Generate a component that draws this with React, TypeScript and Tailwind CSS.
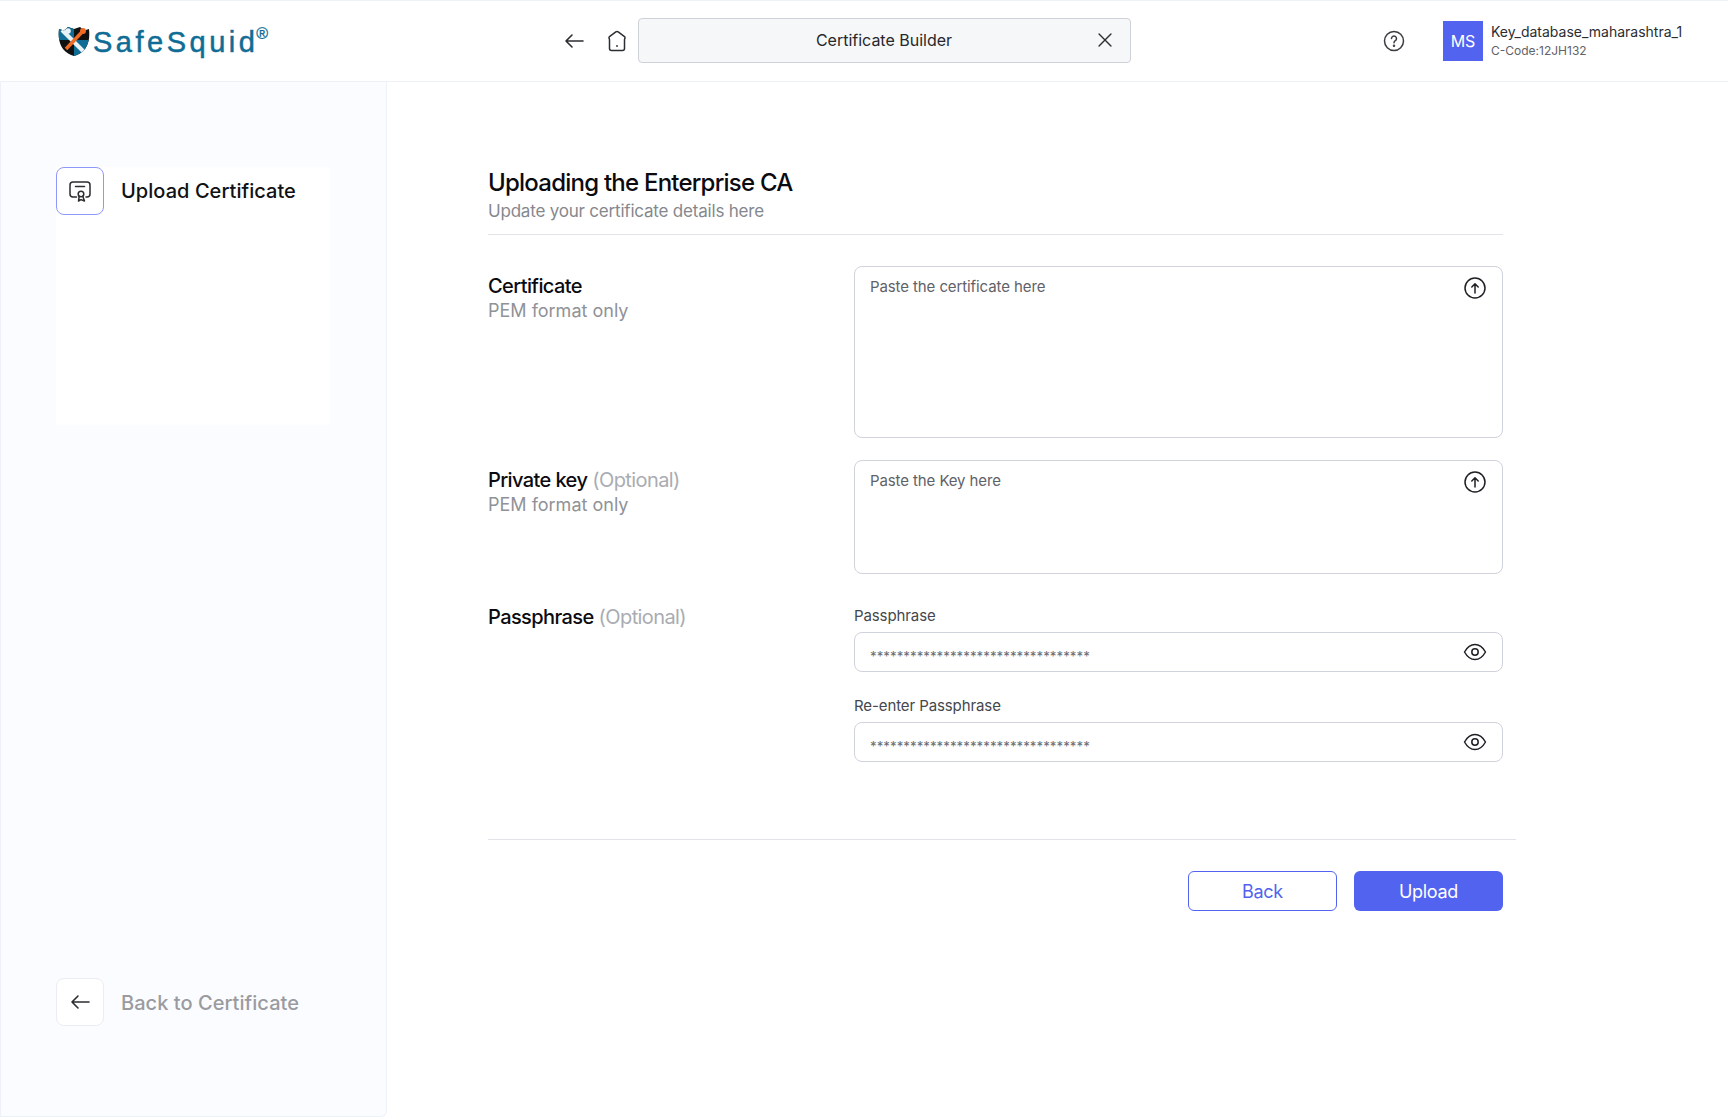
import React from "react";

const Arrow = ({ className = "" }: { className?: string }) => (
  <svg viewBox="0 0 24 24" className={className} fill="none" stroke="currentColor" strokeWidth="1.6" strokeLinecap="round" strokeLinejoin="round">
    <path d="M21 12H4M10 6l-6 6 6 6" />
  </svg>
);

const UploadIcon = () => (
  <svg viewBox="0 0 24 24" className="-mt-[1px] w-6 h-6 text-[#1f2024]" fill="none" stroke="currentColor" strokeWidth="1.5" strokeLinecap="round" strokeLinejoin="round">
    <circle cx="12" cy="12" r="10" />
    <path d="M12 17V8M8.8 11 12 7.8l3.2 3.2" />
  </svg>
);

const EyeIcon = () => (
  <svg viewBox="0 0 24 24" className="w-6 h-6 text-[#1f2024]" fill="none" stroke="currentColor" strokeWidth="1.5" strokeLinecap="round" strokeLinejoin="round">
    <path d="M1.500 12C4.300 7 7.800 4.500 12 4.500S19.700 7 22.500 12c-2.800 5-6.300 7.500-10.500 7.500S4.300 17 1.500 12Z" />
    <circle cx="12" cy="12" r="3.200" />
  </svg>
);

const Logo = () => (
  <div className="flex items-center">
    <svg viewBox="0 0 32 32" className="w-[32px] h-[32px]">
      <defs>
        <clipPath id="shield">
          <path d="M1 4 6 5.500 10 2l6 2 6-2 4 3.500L31 4c1 9-.5 15-4 20-3 3.500-7 6-11 7-4-1-8-3.500-11-7C1.500 19 0 13 1 4Z" />
        </clipPath>
      </defs>
      <g clipPath="url(#shield)">
        <rect width="32" height="32" fill="#111" />
        <rect x="0" y="0" width="16" height="15" fill="#0f6c95" />
        <rect x="16" y="15" width="16" height="17" fill="#0f6c95" />
        <path d="M4 5 26 27" stroke="#e8f1f6" strokeWidth="4" />
        <path d="M8 24 25 6" stroke="#ef6a24" strokeWidth="3.500" />
      </g>
      <circle cx="10" cy="6" r="2.800" fill="#e8f1f6" />
      <circle cx="25" cy="6" r="3" fill="#ef6a24" />
    </svg>
    <span className="ml-[3px] mt-[2px] flex items-start font-['Liberation_Sans',sans-serif] text-[29px] leading-none tracking-[3.5px] text-[#0f6c95] [-webkit-text-stroke:0.5px_#0f6c95]">
      SafeSquid
      <span className="text-[16px] tracking-normal -ml-[2px] mt-[-2px] [-webkit-text-stroke:0.3px_#0f6c95]">®</span>
    </span>
  </div>
);

const SectionLabel = ({ title, optional, sub }: { title: string; optional?: boolean; sub?: boolean }) => (
  <div className="w-[366px] shrink-0">
    <p className="text-[20px] leading-[24px] font-[450] text-[#0b0b0f] tracking-[-0.6px]">
      {title}
      {optional && <span className="font-normal text-[#a9acb2]"> (Optional)</span>}
    </p>
    {sub && <p className="mt-[1px] text-[18px] leading-[24px] text-[#8f9297]">PEM format only</p>}
  </div>
);

const PasteBox = ({ text, height }: { text: string; height: string }) => (
  <div className={`flex flex-1 justify-between rounded-lg border border-[#d0d2dc] pl-[15px] pr-[15px] pt-[10px] ${height}`}>
    <span className="text-[15px] leading-[20px] tracking-[-0.1px] text-[#5f6268]">{text}</span>
    <UploadIcon />
  </div>
);

const PassField = ({ label }: { label: string }) => (
  <div>
    <p className="text-[15px] leading-[20px] tracking-[-0.1px] text-[#44474d] mb-[6px]">{label}</p>
    <div className="flex h-[40px] items-center justify-between rounded-lg border border-[#d0d2dc] pl-[15px] pr-[15px]">
      <span className="text-[13.300px] leading-none pt-[9px] text-[#6b6e74]">*********************************</span>
      <EyeIcon />
    </div>
  </div>
);

export default function App() {
  return (
    <div className="flex h-[1117px] w-[1728px] flex-col overflow-hidden bg-white font-['Inter',sans-serif]">
      <header className="flex h-[82px] shrink-0 items-center border-b border-[#eef2f8] border-t pl-[58px] pr-[44px]">
        <div className="w-[504px] shrink-0">
          <Logo />
        </div>
        <div className="flex items-center">
          <Arrow className="h-[24px] w-[24px] text-[#2b2d31]" />
          <svg viewBox="0 0 24 24" className="ml-[19px] h-[24px] w-[24px] text-[#2b2d31]" fill="none" stroke="currentColor" strokeWidth="1.500" strokeLinejoin="round">
            <path d="M10.800 2.900a2 2 0 0 1 2.400 0l6.300 4.700a1.500 1.500 0 0 1 .5 1.500l-.5 1.300v9a2 2 0 0 1-2 2H6.500a2 2 0 0 1-2-2v-9L4 9.100a1.500 1.500 0 0 1 .5-1.500Z" />
            <circle cx="12" cy="17" r=".9" fill="currentColor" stroke="none" />
          </svg>
          <div className="ml-[9px] -mt-[2px] flex h-[45px] w-[493px] items-center rounded border border-[#cfd1d8] bg-[#f6f7f9] pl-[35px] pr-[14px]">
            <span className="flex-1 text-center text-[16px] text-[#26282c]">Certificate Builder</span>
            <svg viewBox="0 0 24 24" className="h-[22px] w-[22px] text-[#2b2d31]" fill="none" stroke="currentColor" strokeWidth="1.500" strokeLinecap="round">
              <path d="M5.500 5.500l13 13M18.500 5.500l-13 13" />
            </svg>
          </div>
        </div>
        <svg viewBox="0 0 24 24" className="ml-[251px] h-[24px] w-[24px] text-[#3a3c41]" fill="none" stroke="currentColor" strokeWidth="1.500" strokeLinecap="round" strokeLinejoin="round">
          <circle cx="12" cy="12" r="9.500" />
          <path d="M9.500 9.500a2.500 2.500 0 1 1 3.800 2.200c-.8.500-1.300 1-1.300 2" />
          <circle cx="12" cy="16.800" r=".5" fill="currentColor" />
        </svg>
        <div className="ml-[37px] flex h-[40px] w-[40px] items-center justify-center bg-[#5263f0] text-[16px] text-white">MS</div>
        <div className="ml-[8px]">
          <p className="text-[14px] leading-[18px] text-[#2b2d31]">Key_database_maharashtra_1</p>
          <p className="mt-[2px] text-[12px] leading-[16px] text-[#5f6268]">C-Code:12JH132</p>
        </div>
      </header>

      <div className="flex flex-1">
        <aside className="flex w-[387px] shrink-0 flex-col justify-between rounded-br-md border-r border-b border-l border-[#eef2f8] bg-[#fbfcff] pb-[90px] pl-[55px] pt-[85px]">
          <div className="flex h-[258px] w-[274px] items-start bg-white">
            <div className="flex h-[48px] w-[48px] items-center justify-center rounded-lg border border-[#8f98fa] bg-white">
              <svg viewBox="0 0 24 24" className="h-[24px] w-[24px] text-[#2b2d31]" fill="none" stroke="currentColor" strokeWidth="1.500" strokeLinecap="round" strokeLinejoin="round">
                <path d="M8.500 18H5A3 3 0 0 1 2 15V6a3 3 0 0 1 3-3h14a3 3 0 0 1 3 3v9a3 3 0 0 1-3 3h-1" />
                <path d="M7.500 7.500h9" />
                <circle cx="13" cy="15" r="2.800" />
                <path d="M11.200 17.300 10.500 22l2.500-1.400 3.500 1.400-1.700-4.700" />
              </svg>
            </div>
            <span className="ml-[17px] mt-[10px] text-[20px] leading-[28px] font-[450] tracking-[0.05px] text-[#101114]">Upload Certificate</span>
          </div>
          <div className="flex items-center">
            <div className="flex h-[48px] w-[48px] items-center justify-center rounded-lg border border-[#ecedf3] bg-white">
              <Arrow className="h-[24px] w-[24px] text-[#2b2d31]" />
            </div>
            <span className="ml-[17px] pt-[1px] text-[20px] leading-[28px] font-[450] tracking-[0.05px] text-[#9a9b9f]">Back to Certificate</span>
          </div>
        </aside>

        <main className="flex-1 pl-[101px] pt-[86px]">
          <div className="w-[1015px]">
            <h1 className="text-[24px] leading-[30px] font-[450] tracking-[-0.77px] text-[#0b0b0f]">Uploading the Enterprise CA</h1>
            <p className="mt-[1px] text-[17px] leading-[24px] tracking-[-0.2px] text-[#85888e]">Update your certificate details here</p>
            <div className="mt-[11px] border-t border-[#e1e3e8]" />

            <div className="mt-[31px] flex">
              <div className="pt-[8px]"><SectionLabel title="Certificate" sub /></div>
              <PasteBox text="Paste the certificate here" height="h-[172px]" />
            </div>
            <div className="mt-[22px] flex">
              <div className="pt-[8px]"><SectionLabel title="Private key" optional sub /></div>
              <PasteBox text="Paste the Key here" height="h-[114px]" />
            </div>
            <div className="mt-[32px] flex">
              <div className="-mt-[1px]"><SectionLabel title="Passphrase" optional /></div>
              <div className="flex flex-1 flex-col gap-[24px]">
                <PassField label="Passphrase" />
                <PassField label="Re-enter Passphrase" />
              </div>
            </div>
          </div>
          <div className="mt-[77px] w-[1028px] border-t border-[#e1e3e8]" />
          <div className="mt-[31px] flex w-[1015px] justify-end gap-[17px]">
            <button className="h-[40px] w-[149px] rounded-md border border-[#5263f0] bg-white text-[18px] tracking-[-0.3px] text-[#5263f0]">Back</button>
            <button className="h-[40px] w-[149px] rounded-md bg-[#5263f0] text-[18px] tracking-[-0.3px] text-white">Upload</button>
          </div>
        </main>
      </div>
    </div>
  );
}
